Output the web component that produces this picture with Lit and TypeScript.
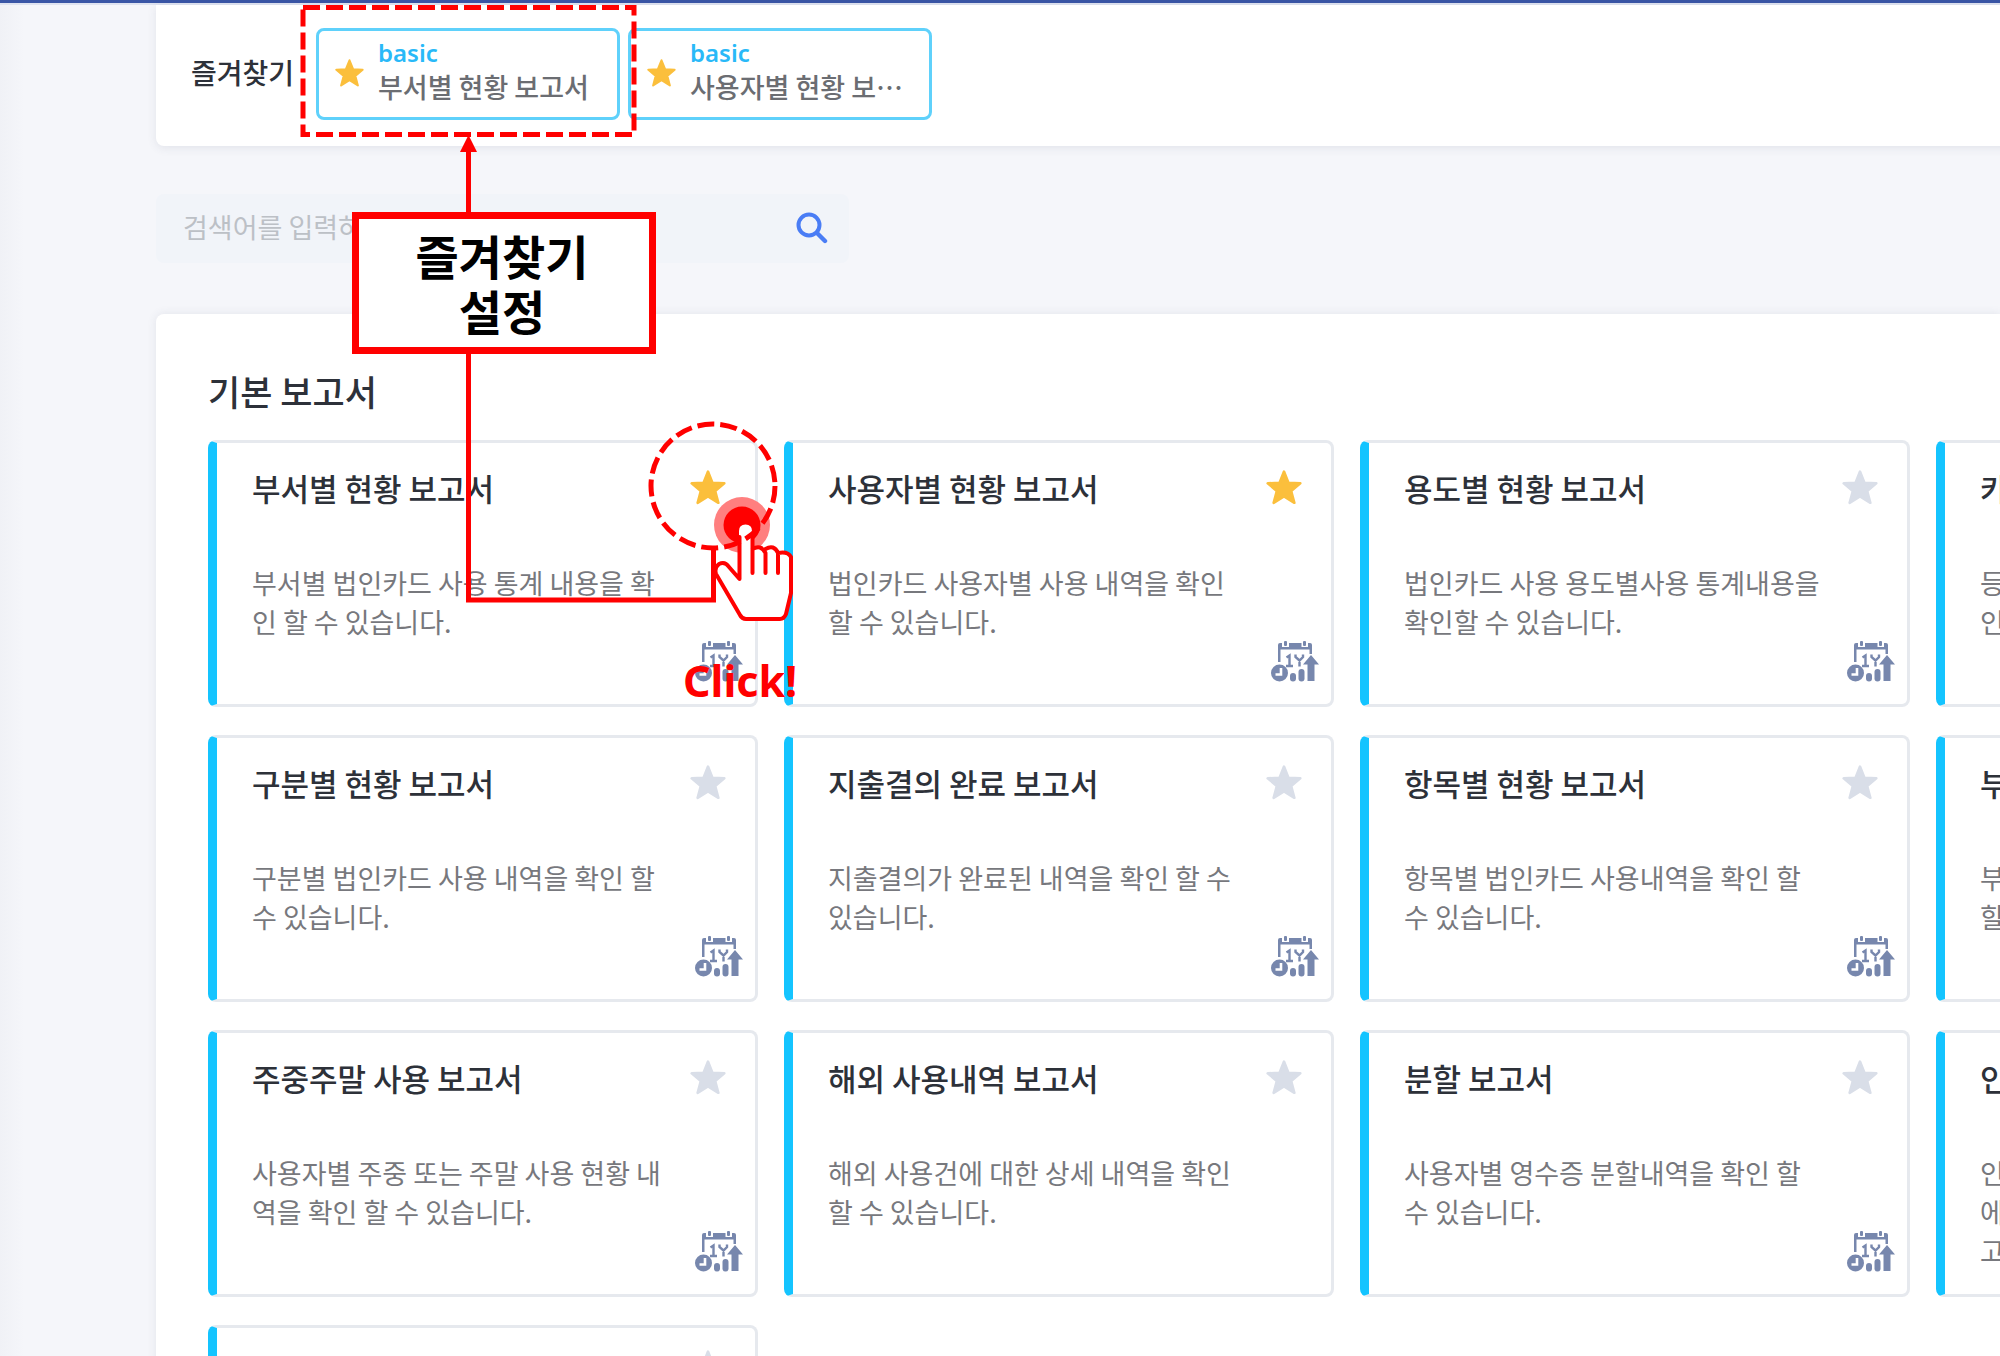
import { LitElement, html, css, svg } from "lit";
import { customElement, property } from "lit/decorators.js";
import { classMap } from "lit/directives/class-map.js";

interface Report {
  title: string;
  desc: string;
  favorite?: boolean;
  yearly?: boolean;
}

const REPORTS: Report[] = [
  { title: "부서별 현황 보고서", desc: "부서별 법인카드 사용 통계 내용을 확인 할 수 있습니다.", favorite: true, yearly: true },
  { title: "사용자별 현황 보고서", desc: "법인카드 사용자별 사용 내역을 확인 할 수 있습니다.", favorite: true, yearly: true },
  { title: "용도별 현황 보고서", desc: "법인카드 사용 용도별사용 통계내용을 확인할 수 있습니다.", yearly: true },
  { title: "카", desc: "등\n인" },
  { title: "구분별 현황 보고서", desc: "구분별 법인카드 사용 내역을 확인 할 수 있습니다.", yearly: true },
  { title: "지출결의 완료 보고서", desc: "지출결의가 완료된 내역을 확인 할 수 있습니다.", yearly: true },
  { title: "항목별 현황 보고서", desc: "항목별 법인카드 사용내역을 확인 할 수 있습니다.", yearly: true },
  { title: "부", desc: "부\n할" },
  { title: "주중주말 사용 보고서", desc: "사용자별 주중 또는 주말 사용 현황 내역을 확인 할 수 있습니다.", yearly: true },
  { title: "해외 사용내역 보고서", desc: "해외 사용건에 대한 상세 내역을 확인 할 수 있습니다." },
  { title: "분할 보고서", desc: "사용자별 영수증 분할내역을 확인 할 수 있습니다.", yearly: true },
  { title: "인", desc: "인\n에\n고" },
  { title: "", desc: "" },
];

const starPath = svg`<path d="M17 1.5 L21.2 12 L32.4 12.6 L23.8 19.8 L26.8 31 L17 24.9 L7.2 31 L10.2 19.8 L1.6 12.6 L12.8 12 Z"
  fill="currentColor" stroke="currentColor" stroke-width="2.4" stroke-linejoin="round" />`;
const star = html`<svg class="star" viewBox="0 0 34 34" aria-hidden="true">${starPath}</svg>`;

const yearlyIcon = html`<svg class="yearly" viewBox="0 0 48 44" aria-hidden="true">
  <g fill="#7787ad">
    <rect x="13" y="1" width="3" height="5" rx="1" />
    <rect x="32" y="1" width="3" height="5" rx="1" />
    <path d="M18 3 H30.500 V7 H41 V14 H38.500 V9.500 H9.500 V22 H7 V5 Q7 3 9 3 H11 V7 H18 Z" />
    <path d="M37 3 H39 Q41 3 41 5 V8 H37 Z" />
    <path d="M40 15 L48 24.500 H43.500 V41 H36.500 V24.500 H32 Z" />
    <rect x="27.500" y="29" width="6" height="12.500" rx="3" />
    <rect x="19" y="33" width="6" height="8.500" rx="3" />
    <circle cx="8.500" cy="33" r="8.500" />
  </g>
  <path d="M10 28 V34.500 H4.500" fill="none" stroke="#fff" stroke-width="2.600" />
  <path d="M15.500 17.500 L18.500 15.500 V25.500 M15 26 H22 M24.500 14.500 V17 L28.500 20.500 L32 17 V14.500 M28.500 20.500 V26.500"
    fill="none" stroke="#7787ad" stroke-width="2.400" />
</svg>`;

@customElement("report-card")
export class ReportCard extends LitElement {
  @property({ attribute: false }) report!: Report;

  static styles = css`
    :host { display: block; }
    .card {
      box-sizing: border-box;
      height: 100%;
      min-height: 267px;
      padding: 22px 12px 20px 35px;
      border: 3px solid #e6e9ee;
      border-left: 9px solid #14c4ff;
      border-radius: 8px;
      background: #fff;
      display: flex;
      flex-direction: column;
      position: relative;
    }
    .head { display: flex; align-items: center; justify-content: space-between; padding-right: 17px; }
    .title { margin: 0; font-size: 31px; line-height: 46px; font-weight: 500; color: #2d3139; white-space: nowrap; }
    .fav { border: 0; padding: 0; background: none; color: #d9dee8; line-height: 0; cursor: pointer; }
    .fav.on { color: #fbbf3c; }
    .star { width: 36px; height: 36px; }
    .desc {
      margin: 0;
      padding-top: 52px;
      width: 420px;
      font-size: 27px;
      line-height: 39px;
      color: #77787d;
      white-space: pre-line;
      word-break: break-all;
    }
    .yearly { position: absolute; right: 12px; bottom: 20px; width: 48px; height: 44px; }
  `;

  render() {
    const r = this.report;
    return html`<article class="card">
      <div class="head">
        <h3 class="title">${r.title}</h3>
        <button class=${classMap({ fav: true, on: !!r.favorite })} type="button" aria-label="즐겨찾기">${star}</button>
      </div>
      <p class="desc">${r.desc}</p>
      ${r.yearly ? yearlyIcon : null}
    </article>`;
  }
}

@customElement("app-root")
export class AppRoot extends LitElement {
  static styles = css`
    :host {
      display: block;
      font-family: "Noto Sans CJK KR", sans-serif;
      background: linear-gradient(to right, #f0f1f6, #f5f6fa 24px);
      height: 100vh;
      overflow: hidden;
      position: relative;
    }
    .topline { height: 3px; background: #3a56a6; border-bottom: 2px solid #dfe3f0; }
    .page { padding-left: 156px; }
    .favorites {
      display: flex;
      align-items: center;
      height: 141px;
      box-sizing: border-box;
      padding: 0 35px 4px;
      margin-right: -20px;
      background: #fff;
      border-radius: 0 0 0 8px;
      box-shadow: 0 2px 10px rgba(60, 70, 100, 0.1);
    }
    .label { font-size: 28px; line-height: 40px; font-weight: 500; color: #2d3139; margin: 0 22px 0 0; padding-bottom: 4px; width: 103px; white-space: nowrap; }
    .chips { display: flex; gap: 8px; }
    .chip {
      display: flex;
      align-items: center;
      gap: 14px;
      box-sizing: border-box;
      width: 304px;
      height: 92px;
      padding: 0 18px 0 16px;
      border: 3px solid #5fd1fb;
      border-radius: 8px;
      background: #fff;
      color: inherit;
      text-decoration: none;
    }
    .star { flex: none; width: 29px; height: 29px; color: #fbbf3c; }
    .text { min-width: 0; padding-bottom: 8px; font-size: 27px; line-height: 34px; font-weight: 500; color: #6b6d72; white-space: nowrap; }
    .kind { display: block; color: #29b9f8; font-family: "Noto Sans", "Noto Sans CJK KR", sans-serif; font-size: 24px; font-weight: 600; }
    .name { display: block; }
    .search {
      display: flex;
      align-items: center;
      justify-content: space-between;
      box-sizing: border-box;
      width: 693px;
      height: 69px;
      margin: 48px 0 51px;
      padding: 0 20px 4px 27px;
      background: #f1f4f9;
      border-radius: 8px;
    }
    .query { flex: 1; min-width: 0; border: 0; padding: 0; background: none; outline: 0; font: 27px "Noto Sans CJK KR", sans-serif; color: #2d3139; }
    .query::placeholder { color: #bcc0c6; opacity: 1; }
    .go { border: 0; background: none; padding: 0; line-height: 0; }
    .glass { width: 34px; height: 34px; }
    .reports {
      padding: 53px 52px 60px;
      background: #fff;
      border-radius: 8px 0 0 0;
      box-shadow: 0 0 10px rgba(60, 70, 100, 0.1);
    }
    .heading { margin: 0 0 26px; font-size: 35px; line-height: 47px; font-weight: 500; color: #2d3139; }
    .grid { display: grid; grid-template-columns: repeat(4, 550px); gap: 28px 26px; }
    .guide { position: absolute; left: 0; top: 0; width: 2000px; height: 1356px; pointer-events: none; }
    .callout {
      position: absolute;
      left: 352px;
      top: 212px;
      box-sizing: border-box;
      width: 304px;
      height: 142px;
      padding: 0 4px 2px 0;
      border: 7px solid #f00;
      background: #fff;
      display: flex;
      align-items: center;
      justify-content: center;
      text-align: center;
      font-size: 47px;
      line-height: 55px;
      font-weight: 700;
      color: #000;
      margin: 0;
    }
    .click { position: absolute; left: 683px; top: 650px; margin: 0; font: 700 43px/62px "Noto Sans", sans-serif; color: #f00; }
  `;

  private chip(name: string) {
    return html`<a class="chip" href="#">${star}<span class="text"><span class="kind">basic</span><span class="name">${name}</span></span></a>`;
  }

  render() {
    return html`
      <div class="topline"></div>
      <main class="page">
        <section class="favorites">
          <h2 class="label">즐겨찾기</h2>
          <nav class="chips">${this.chip("부서별 현황 보고서")}${this.chip("사용자별 현황 보⋯")}</nav>
        </section>
        <form class="search" role="search">
          <input class="query" type="text" aria-label="검색어" placeholder="검색어를 입력하세요" />
          <button class="go" type="button" aria-label="검색">
            <svg class="glass" viewBox="0 0 34 34"><g fill="none" stroke="#4a7df5" stroke-width="4" stroke-linecap="round"><circle cx="14" cy="15" r="10.500" /><path d="M22 23 L30 31" stroke-width="4.400" /></g></svg>
          </button>
        </form>
        <section class="reports">
          <h2 class="heading">기본 보고서</h2>
          <div class="grid">${REPORTS.map((r) => html`<report-card .report=${r}></report-card>`)}</div>
        </section>
      </main>
      <svg class="guide" viewBox="0 0 2000 1356" aria-hidden="true">
        <g fill="none" stroke="#f00">
          <rect x="303" y="7.500" width="331" height="127" stroke-width="5" stroke-dasharray="17 6" />
          <path d="M468.500 150 V600 H713.500 V548" stroke-width="5" />
        </g>
        <path d="M468.500 135 L477 152 H460 Z" fill="#f00" />
        <circle cx="742" cy="525" r="28" fill="#ff7f7f" />
        <circle cx="742" cy="525" r="18.500" fill="#f00" />
        <path d="M739 579 V531 Q739 524.500 745.500 524.500 Q752 524.500 752 531 V549 Q758 544 765.500 550 Q772 543 778 552 Q786 549 791 557 V593 L786 615 Q785 619 781 619 H745 Q742 619 740 616 L716 574 Q714 565 721 563 Q726 562 729 567 Z" fill="#fff" />
        <circle cx="713" cy="486" r="62" fill="none" stroke="#f00" stroke-width="5" stroke-dasharray="17 6" />
        <path d="M739.500 537 V579 L729 567 Q725 561 719 564 Q714 568 716 574 L740 615 Q742 619 746 619 H780 Q784 619 786 614 L791 593 V557 Q788 551 778 553 M752.500 536 V573 M752.500 549 Q761 544 765.500 553 V573 M765.500 549 Q774 544 778 553 V573"
          fill="none" stroke="#f00" stroke-width="4" stroke-linejoin="round" stroke-linecap="round" />
      </svg>
      <p class="callout">즐겨찾기<br />설정</p>
      <p class="click">Click!</p>
    `;
  }
}
